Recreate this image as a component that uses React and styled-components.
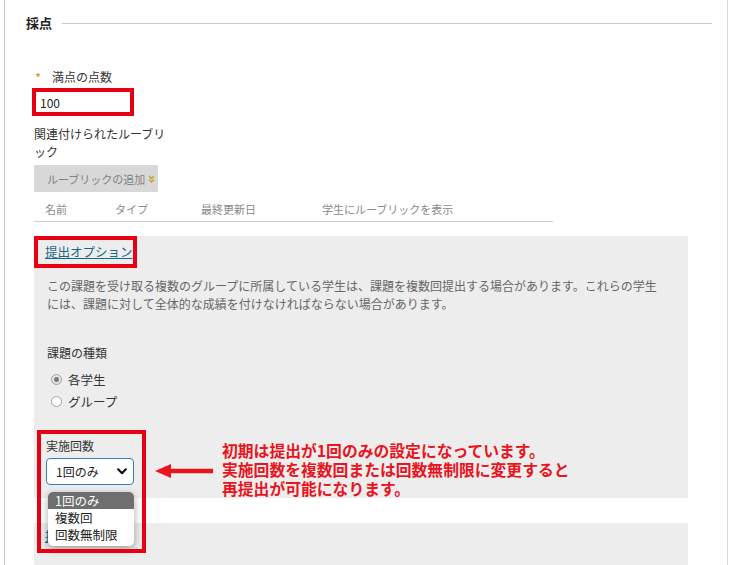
import React from "react";
import styled, { createGlobalStyle } from "styled-components";

const GlobalStyle = createGlobalStyle`
  html, body { margin: 0; padding: 0; background: #fff; }
  body { font-family: "Noto Sans CJK JP", "Noto Sans", sans-serif; color: #333; }
  * { box-sizing: border-box; }
`;

const Frame = styled.div`
  margin-left: 4px;
  width: 724px;
  height: 565px;
  border-left: 1px solid #c8c8c8;
  border-right: 1px solid #dcdcdc;
  overflow: hidden;
  padding-top: 14px;
`;

const HeadingRow = styled.div`
  display: flex;
  align-items: center;
  gap: 10px;
  padding: 0 15px 0 21px;
`;

const Heading = styled.h2`
  margin: 0;
  font-size: 13px;
  line-height: 18px;
  font-weight: 700;
  color: #222;
`;

const Rule = styled.div`
  flex: 1;
  height: 1px;
  background: #c9c9c9;
`;

const Body = styled.div`
  padding-left: 29px;
`;

const FieldLabel = styled.div`
  display: flex;
  align-items: flex-end;
  height: 16px;
  margin-top: 37px;
  font-size: 12px;
  line-height: 16px;
  color: #333;
`;

const Required = styled.span`
  width: 18px;
  height: 14px;
  padding-left: 1px;
  color: #e08a2e;
  font-size: 13px;
  line-height: 14px;
`;

const ScoreInput = styled.input`
  display: block;
  margin: 3px 0 0 -2px;
  width: 102px;
  height: 28px;
  border: 4px solid #e60012;
  padding: 0 4px;
  font-family: inherit;
  font-size: 12px;
  color: #222;
  background: #fff;
  outline: none;
`;

const RubricLabel = styled.div`
  margin-top: 9px;
  width: 134px;
  font-size: 12px;
  line-height: 18px;
  color: #333;
`;

const GrayButton = styled.div`
  display: flex;
  align-items: center;
  gap: 3px;
  margin-top: 4px;
  width: 124px;
  height: 27px;
  padding-left: 13px;
  background: #d8d8d8;
  color: #808080;
  font-size: 11px;
`;

const TableHead = styled.div`
  display: grid;
  grid-template-columns: 70px 86px 121px 1fr;
  margin-top: 5px;
  width: 519px;
  height: 25px;
  padding-left: 11px;
  border-bottom: 1px solid #cfcfcf;
  font-size: 11px;
  line-height: 24px;
  color: #8a8a8a;
`;

const Panel = styled.div`
  margin-top: ${(p) => p.$top}px;
  width: 654px;
  background: #ededed;
  padding: ${(p) => p.$pad};
`;

const LinkBox = styled.div`
  margin: 2px 0 0 -13px;
  width: 103px;
  height: 32px;
  border: 4px solid #e60012;
  padding-left: 7px;
  display: flex;
  align-items: center;
`;

const PanelLink = styled.a`
  font-size: 12.5px;
  color: #156a87;
  text-decoration: underline;
  line-height: 18px;
  white-space: nowrap;
`;

const Paragraph = styled.p`
  margin: 9px 0 0;
  width: 618px;
  font-size: 12px;
  line-height: 18px;
  color: #666;
`;

const SubLabel = styled.div`
  margin-top: ${(p) => p.$top}px;
  font-size: 12px;
  line-height: ${(p) => p.$lh || 18}px;
  color: #333;
`;

const RadioList = styled.div`
  margin-top: 6px;
  display: flex;
  flex-direction: column;
`;

const RadioRow = styled.label`
  display: flex;
  align-items: center;
  gap: 6px;
  height: 22px;
  padding-left: 4px;
  font-size: 12.5px;
  color: #333;
`;

const RadioDot = styled.span`
  width: 11px;
  height: 11px;
  border-radius: 50%;
  border: 1px solid #a2a2a2;
  background: ${(p) => (p.$checked ? "#e4e4e4" : "#fff")};
  display: flex;
  align-items: center;
  justify-content: center;
  &::after {
    content: "";
    width: 5px;
    height: 5px;
    border-radius: 50%;
    background: ${(p) => (p.$checked ? "#7a7a7a" : "transparent")};
  }
`;

const CountRow = styled.div`
  display: flex;
  align-items: flex-start;
  margin: 26px 0 0 -1px;
`;

const SelectGroup = styled.div`
  position: relative;
  width: 88px;
`;

const Highlight = styled.div`
  position: absolute;
  left: -9px;
  top: -8px;
  width: 109px;
  height: 123px;
  border: 4px solid #e60012;
  pointer-events: none;
  z-index: 3;
`;

const SelectBox = styled.div`
  margin-top: 4px;
  height: 27px;
  border: 1px solid #3a7db3;
  border-radius: 4px;
  background: #fff;
  display: flex;
  align-items: center;
  justify-content: space-between;
  padding: 0 6px 0 9px;
  font-size: 12px;
  color: #222;
`;

const Menu = styled.div`
  position: absolute;
  left: 2px;
  top: 54px;
  width: 86px;
  background: #fff;
  border-radius: 5px;
  overflow: hidden;
  padding-bottom: 3px;
  box-shadow: 0 3px 8px rgba(0, 0, 0, 0.35);
  z-index: 2;
`;

const MenuItem = styled.div`
  height: 17px;
  line-height: 17px;
  padding-left: 7px;
  font-size: 12.5px;
  color: ${(p) => (p.$active ? "#fff" : "#222")};
  background: ${(p) => (p.$active ? "#6f6f6f" : "transparent")};
`;

const Arrow = styled.svg`
  margin: 26px 0 0 21px;
  flex: none;
`;

const Note = styled.div`
  margin: 3px 0 0 9px;
  display: flex;
  flex-direction: column;
  font-size: 15.8px;
  font-weight: 700;
  color: #e8141e;
  white-space: nowrap;
`;

const NoteLine = styled.span`
  display: block;
  height: 19px;
  line-height: 19px;
`;

const SecondLink = styled(PanelLink)`
  display: block;
  width: 80px;
  overflow: hidden;
`;

const Chevron = () => (
  <svg width="10" height="7" viewBox="0 0 10 7">
    <path d="M1.2 1.3 L5 5.2 L8.8 1.3" fill="none" stroke="#111" strokeWidth="2.2" strokeLinecap="round" strokeLinejoin="round" />
  </svg>
);

const DoubleChevron = () => (
  <svg width="7" height="8" viewBox="0 0 7 8">
    <path d="M1 1 L3.5 3.5 L6 1 M1 4.5 L3.5 7 L6 4.5" fill="none" stroke="#c9a443" strokeWidth="1.6" />
  </svg>
);

export default function App() {
  return (
    <>
      <GlobalStyle />
      <Frame>
        <HeadingRow>
          <Heading>採点</Heading>
          <Rule />
        </HeadingRow>
        <Body>
          <FieldLabel>
            <Required>*</Required>
            満点の点数
          </FieldLabel>
          <ScoreInput readOnly value="100" />
          <RubricLabel>関連付けられたルーブリック</RubricLabel>
          <GrayButton>
            ルーブリックの追加
            <DoubleChevron />
          </GrayButton>
          <TableHead>
            <span>名前</span>
            <span>タイプ</span>
            <span>最終更新日</span>
            <span>学生にルーブリックを表示</span>
          </TableHead>

          <Panel $top={14} $pad="0 13px 0 13px">
            <LinkBox>
              <PanelLink>提出オプション</PanelLink>
            </LinkBox>
            <Paragraph>
              この課題を受け取る複数のグループに所属している学生は、課題を複数回提出する場合があります。これらの学生には、課題に対して全体的な成績を付けなければならない場合があります。
            </Paragraph>
            <SubLabel $top={31}>課題の種類</SubLabel>
            <RadioList>
              <RadioRow>
                <RadioDot $checked />
                各学生
              </RadioRow>
              <RadioRow>
                <RadioDot />
                グループ
              </RadioRow>
            </RadioList>
            <CountRow>
              <SelectGroup>
                <Highlight />
                <SubLabel $top={0} $lh={16}>実施回数</SubLabel>
                <SelectBox>
                  1回のみ
                  <Chevron />
                </SelectBox>
                <Menu>
                  <MenuItem $active>1回のみ</MenuItem>
                  <MenuItem>複数回</MenuItem>
                  <MenuItem>回数無制限</MenuItem>
                </Menu>
              </SelectGroup>
              <Arrow width="58" height="14" viewBox="0 0 58 14">
                <path d="M0 7 L16 0 L16 4.8 L58 4.8 L58 9.2 L16 9.2 L16 14 Z" fill="#e8141e" />
              </Arrow>
              <Note>
                <NoteLine>初期は提出が1回のみの設定になっています。</NoteLine>
                <NoteLine>実施回数を複数回または回数無制限に変更すると</NoteLine>
                <NoteLine>再提出が可能になります。</NoteLine>
              </Note>
            </CountRow>
          </Panel>

          <Panel $top={25} $pad="4px 11px 30px">
            <SecondLink>提出物の詳細</SecondLink>
          </Panel>
        </Body>
      </Frame>
    </>
  );
}
